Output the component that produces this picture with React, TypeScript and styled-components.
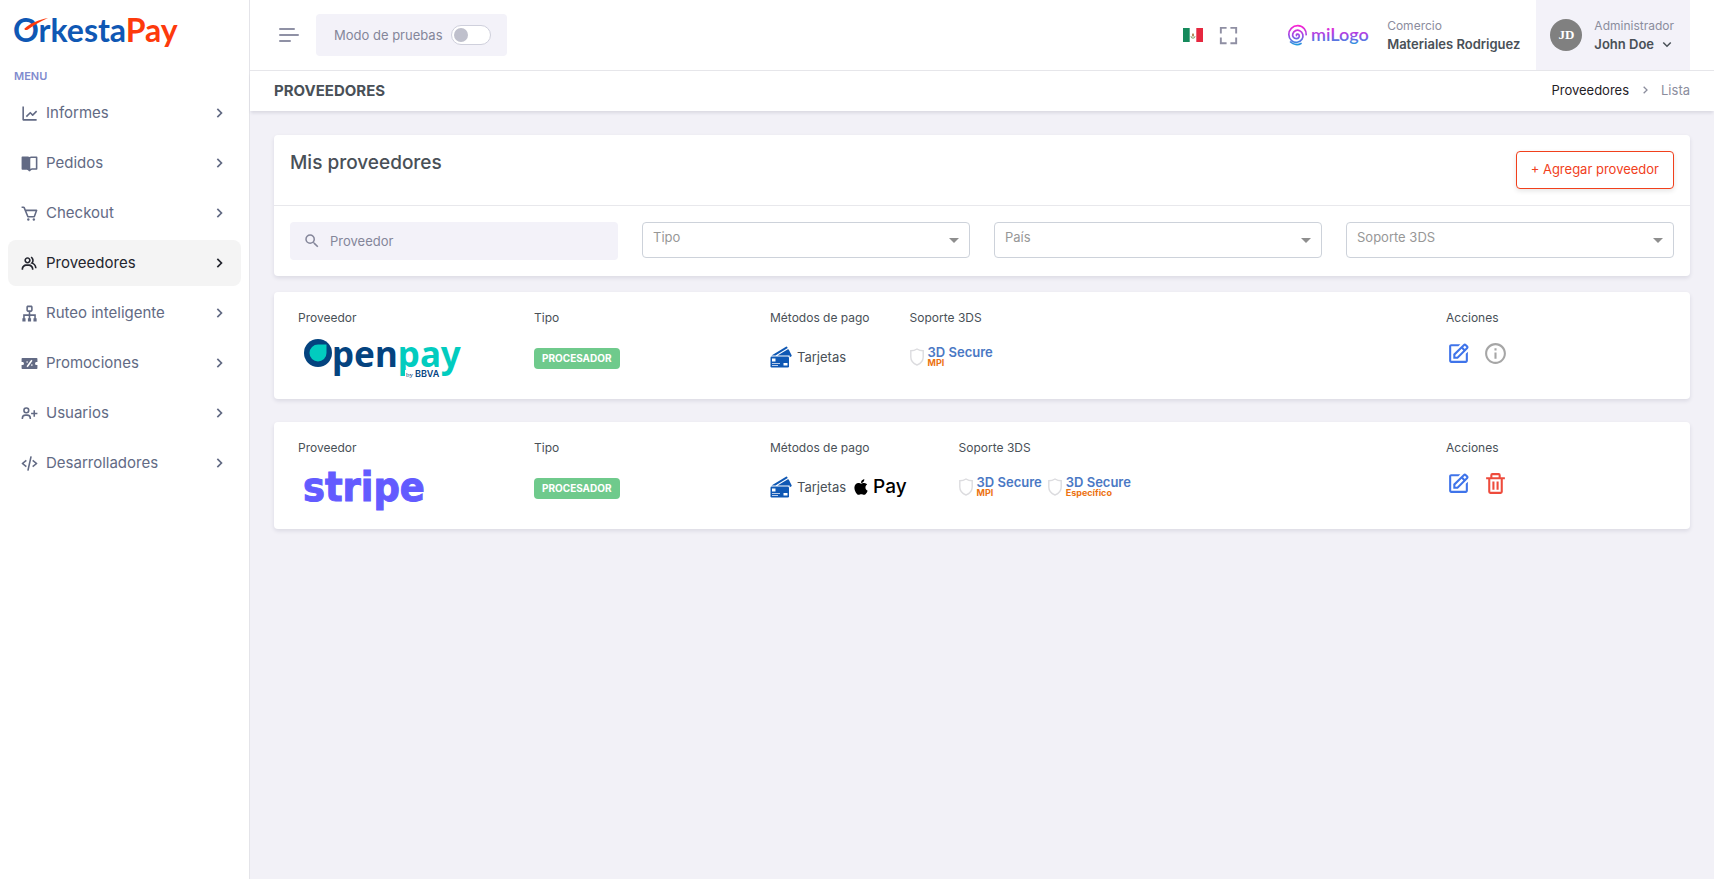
import React from "react";
import styled, { createGlobalStyle } from "styled-components";
import {
  BiSolidBookOpen,
  BiLineChart,
  BiCart,
  BiGroup,
  BiSitemap,
  BiSolidDiscount,
  BiUserPlus,
  BiCodeAlt,
  BiChevronRight,
  BiChevronDown,
  BiFullscreen,
  BiEdit,
  BiInfoCircle,
  BiTrash,
} from "react-icons/bi";
import { MdSearch } from "react-icons/md";
import { FaApple } from "react-icons/fa";

const GlobalStyle = createGlobalStyle`
  *, *::before, *::after { box-sizing: border-box; }
  body {
    margin: 0;
    background: #f2f1f7;
    color: #495057;
    font-family: Inter, "Liberation Sans", sans-serif;
    font-size: 13px;
    line-height: 20px;
  }
  button, input, select { font: inherit; color: inherit; }
  button { cursor: pointer; }
  svg { display: block; flex: none; }
  h1, h2, dl, dd, ul, ol, p { margin: 0; padding: 0; }
  ul, ol { list-style: none; }
`;

const Shell = styled.div`
  display: flex;
  min-height: 100vh;
`;

/* ---------- Sidebar ---------- */

const Sidebar = styled.aside`
  flex: none;
  width: 250px;
  background: #fff;
  border-right: 1px solid #e4e4e9;
`;

const Brand = styled.a`
  display: block;
  padding: 8px 0 0 12px;
  height: 66px;
`;

const MenuTitle = styled.p`
  padding-left: 14px;
  color: #7f8bce;
  font-size: 11px;
  font-weight: 600;
`;

const MenuList = styled.ul`
  display: flex;
  flex-direction: column;
  gap: 4px;
  padding: 4px 8px;
`;

const MenuLink = styled.a<{ $active?: boolean }>`
  display: flex;
  align-items: center;
  gap: 7px;
  height: 46px;
  padding: 0 12px;
  border-radius: 8px;
  font-size: 15px;
  text-decoration: none;
  color: ${(p) => (p.$active ? "#23252e" : "#626a84")};
  background: ${(p) => (p.$active ? "#f4f4f4" : "transparent")};
`;

const MenuLabel = styled.span`
  flex: 1;
`;

/* ---------- Header ---------- */

const Main = styled.div`
  flex: 1;
  min-width: 0;
`;

const TopBar = styled.header`
  display: flex;
  align-items: stretch;
  height: 71px;
  padding-right: 24px;
  background: #fff;
  border-bottom: 1px solid #e6e6ea;
`;

const BarGroup = styled.div<{ $gap: number; $start?: number; $end?: number }>`
  display: flex;
  align-items: center;
  gap: ${(p) => p.$gap}px;
  padding-left: ${(p) => p.$start ?? 0}px;
  padding-right: ${(p) => p.$end ?? 0}px;
`;

const Spacer = styled.div`
  flex: 1;
`;

const IconButton = styled.button`
  display: flex;
  padding: 0;
  border: 0;
  background: none;
  color: ${(p) => p.color ?? "#8f8fa3"};
`;

const TestMode = styled.label`
  display: flex;
  align-items: center;
  gap: 8px;
  height: 42px;
  padding: 0 16px 0 18px;
  border-radius: 4px;
  background: #f3f2f9;
  color: #84869a;
`;

const Switch = styled.input`
  appearance: none;
  display: flex;
  align-items: center;
  width: 40px;
  height: 20px;
  margin: 0;
  padding: 0 2px;
  border: 1px solid #cfd0dc;
  border-radius: 10px;
  background: #fff;
  &::before {
    content: "";
    width: 14px;
    height: 14px;
    border-radius: 50%;
    background: #bfc0cc;
  }
  &:checked::before { margin-left: auto; background: #556ee6; }
`;

const Stack = styled.span`
  display: flex;
  flex-direction: column;
  align-items: flex-start;
  line-height: 18px;
`;

const Caption = styled.span`
  color: #8b8d9d;
  font-size: 12px;
`;

const Strong = styled.span`
  display: flex;
  align-items: center;
  gap: 4px;
  font-weight: 600;
  color: #495057;
`;

const UserButton = styled.button`
  display: flex;
  align-items: center;
  gap: 12px;
  padding: 0 14px;
  border: 0;
  background: #f3f2f9;
`;

const Avatar = styled.span`
  width: 32px;
  height: 32px;
  border-radius: 50%;
  background: #808080;
  color: #fff;
  font: bold 13px/32px "Liberation Serif", serif;
  text-align: center;
`;

const TitleBar = styled.div`
  display: flex;
  align-items: center;
  justify-content: space-between;
  height: 40px;
  padding: 0 24px;
  background: #fff;
  box-shadow: 0 3px 3px -1px rgba(40, 40, 70, 0.12);
`;

const PageTitle = styled.h1`
  font-size: 15px;
  font-weight: 700;
`;

const Crumbs = styled.ol`
  display: flex;
  align-items: center;
  gap: 8px;
  padding-bottom: 2px;
  color: #8b8d9d;
`;

const CrumbItem = styled.li`
  display: flex;
  align-items: center;
  gap: 8px;
`;

const CrumbLink = styled.a`
  color: #1f2126;
  text-decoration: none;
`;

/* ---------- Content ---------- */

const Content = styled.main`
  padding: 24px;
`;

const Card = styled.section`
  border-radius: 4px;
  background: #fff;
  box-shadow: 0 2px 4px rgba(15, 20, 58, 0.1);
`;

const CardHeader = styled.div`
  display: flex;
  justify-content: space-between;
  align-items: flex-start;
  padding: 16px;
  border-bottom: 1px solid #e8e8ec;
`;

const CardTitle = styled.h2`
  font-size: 19px;
  font-weight: 500;
  line-height: 24px;
`;

const AddButton = styled.button`
  height: 38px;
  padding: 0 14px 2px;
  border: 1px solid #f1401c;
  border-radius: 4px;
  background: #fff;
  color: #f1401c;
  box-shadow: 0 2px 5px rgba(0, 0, 0, 0.1);
`;

const Filters = styled.div`
  display: grid;
  grid-template-columns: repeat(4, 1fr);
  align-items: start;
  gap: 24px;
  padding: 16px;
`;

const SearchBox = styled.label`
  display: flex;
  align-items: center;
  gap: 9px;
  height: 38px;
  padding: 0 13px;
  border-radius: 4px;
  background: #f3f2f9;
  color: #84869a;
`;

const SearchInput = styled.input`
  flex: 1;
  min-width: 0;
  padding: 0;
  border: 0;
  outline: 0;
  background: none;
  &::placeholder { color: #84869a; opacity: 1; }
`;

const SelectBox = styled.div`
  display: grid;
  align-items: center;
  > * { grid-area: 1 / 1; }
  > svg { justify-self: end; margin-right: 11px; pointer-events: none; }
`;

const Select = styled.select`
  appearance: none;
  width: 100%;
  height: 36px;
  padding: 0 32px 6px 10px;
  border: 1px solid #cdd2da;
  border-radius: 4px;
  background: #fff;
  color: #979797;
`;

const ProviderList = styled.ul`
  display: flex;
  flex-direction: column;
  gap: 23px;
  padding-top: 16px;
`;

const Fields = styled.dl`
  display: flex;
  padding: 16px 24px 17px;
`;

const Field = styled.div<{ $width?: number; $grow?: boolean; $end?: number }>`
  flex: ${(p) => (p.$grow ? "1 1 0" : "none")};
  width: ${(p) => (p.$width ? `${p.$width}px` : "auto")};
  padding-right: ${(p) => p.$end ?? 0}px;
`;

const FieldName = styled.dt`
  margin-bottom: 4px;
  font-size: 12px;
  line-height: 20px;
`;

const FieldValue = styled.dd<{ $gap?: number; $height?: number; $end?: number }>`
  display: flex;
  align-items: center;
  gap: ${(p) => p.$gap ?? 8}px;
  height: ${(p) => p.$height ?? 50}px;
  padding-right: ${(p) => p.$end ?? 0}px;
`;

const Badge = styled.span`
  margin-top: 3px;
  padding: 0 8px;
  border-radius: 4px;
  background: #6fca8c;
  color: #fff;
  font-size: 10px;
  font-weight: 700;
  line-height: 21px;
`;

const Method = styled.span`
  display: flex;
  align-items: center;
  gap: 5px;
`;

const ApplePay = styled.span`
  display: flex;
  align-items: center;
  gap: 3px;
  color: #000;
  font-size: 19px;
  font-weight: 500;
`;

const Secure = styled.span`
  display: flex;
  align-items: center;
  gap: 4px;
`;

const SecureText = styled.span`
  display: flex;
  flex-direction: column;
`;

const SecureName = styled.span`
  color: #4a78c4;
  font-size: 13px;
  font-weight: 600;
  line-height: 12px;
`;

const SecureKind = styled.span`
  color: #ec7211;
  font-size: 9px;
  font-weight: 700;
  line-height: 10px;
`;

/* ---------- Drawings ---------- */

const OrkestaLogo = () => (
  <svg width="180" height="50" viewBox="0 -4 180 50" role="img" aria-label="OrkestaPay">
    <text x="1" y="30" fontFamily="Lato, sans-serif" fontSize="32" fontWeight="700" fill="#0f58b4">
      Orkesta<tspan fill="#fd3a0c">Pay</tspan>
    </text>
    <path d="M12.500 16.500C19 11 26 8 36 6c-7 3-14 7-20 11.500-2 1-4 .5-3.500-1z" fill="#fd3a0c" />
  </svg>
);

const MenuLines = () => (
  <svg width="20" height="14" viewBox="0 0 20 14" stroke="#8f91a5" strokeWidth="2" strokeLinecap="round">
    <path d="M1 1h14M1 7h18M1 13h10" />
  </svg>
);

const MexicoFlag = () => (
  <svg width="20" height="14" viewBox="0 0 20 14" role="img" aria-label="México">
    <path d="M0 0h20v14H0z" fill="#fff" />
    <path d="M0 0h6.700v14H0z" fill="#168a5c" />
    <path d="M13.300 0H20v14h-6.700z" fill="#e6283f" />
    <path d="M8 8.200a2 2 0 0 0 4 0" fill="none" stroke="#7c9a63" />
    <path d="M10 5l1 1.500-.3 2H9.300L9 6.500z" fill="#a87442" />
  </svg>
);

const MiLogo = () => (
  <svg width="84" height="24" viewBox="0 0 84 24" role="img" aria-label="miLogo">
    <defs>
      <linearGradient id="mi" gradientUnits="userSpaceOnUse" x1="0" y1="2" x2="0" y2="23">
        <stop offset="0" stopColor="#ff1fd0" />
        <stop offset="0.500" stopColor="#9a4be6" />
        <stop offset="1" stopColor="#12a5dd" />
      </linearGradient>
    </defs>
    <path
      d="M10.500 12.500c-.6-1.600 1.700-2 2.500-.6 1 1.900-.6 3.900-2.700 3.800-2.700-.1-4.200-2.600-3.500-5C7.700 7.700 11 6.500 13.700 7.700c3.300 1.500 4.200 5.600 2.300 8.600-2.300 3.500-7.200 4-10.400 1.300C1.900 14.400 2 8.600 5.300 5.300 9 1.700 15 1.800 18.300 5.700c1.500 1.800 2 4 1.900 6M4.500 19c3 2.800 7.500 3.300 10.500 1.500"
      fill="none"
      stroke="url(#mi)"
      strokeWidth="1.700"
      strokeLinecap="round"
    />
    <text x="25" y="18" fontFamily="Lato, sans-serif" fontSize="18" fontWeight="600" fill="url(#mi)">
      miLogo
    </text>
  </svg>
);

const OpenpayLogo = () => (
  <svg width="170" height="50" viewBox="0 0 170 50" role="img" aria-label="Openpay by BBVA">
    <circle cx="20" cy="21" r="14" fill="#04437f" />
    <path d="M20 12.500h8.500V21a8.500 8.500 0 1 1-8.500-8.500z" fill="#02ccbf" />
    <text x="34" y="35" fontFamily="'Noto Sans', sans-serif" fontSize="35" fontWeight="700" fill="#04437f">
      pen<tspan fill="#02ccbf">pay</tspan>
    </text>
    <path d="M107 38h35v8h-35z" fill="#fff" />
    <text x="108" y="45" fontFamily="'Liberation Serif', serif" fontSize="7" fill="#04437f">by</text>
    <text x="117" y="45" fontFamily="Inter, sans-serif" fontSize="9" fontWeight="600" fill="#04437f">BBVA</text>
  </svg>
);

const StripeLogo = () => (
  <svg width="170" height="50" viewBox="0 0 170 50" role="img" aria-label="stripe">
    <text
      x="5"
      y="39"
      fontFamily="'DejaVu Sans Condensed', 'Noto Sans', sans-serif"
      fontSize="41"
      fontWeight="700"
      fill="#635bff"
      stroke="#635bff"
      strokeWidth="1"
    >
      stripe
    </text>
  </svg>
);

const CardsIcon = () => (
  <svg width="22" height="22" viewBox="0 0 22 22" fill="#0f58b4">
    <path d="M1.500 9.500L16 .7c.6-.3 1 0 1.200.4l.5 1L5.500 9.500z" />
    <path d="M7.500 9.500l10-6c.6-.3 1.200-.2 1.500.4l2.600 5.400c.3.600 0 1-.5 1.300l-1.400.7V9.500z" />
    <rect x="0.500" y="10.500" width="18.500" height="11" rx="1.200" />
    <path d="M2 12.500h3.500v3H2zM13.500 17h4v2.500h-4z" fill="#fff" />
    <path d="M2 17.500h8M2 19.500h6" stroke="#b9cdea" strokeWidth="1" />
  </svg>
);

const ShieldIcon = () => (
  <svg width="14" height="18" viewBox="0 0 14 18" fill="none" stroke="#dcdcdf" strokeWidth="1.400">
    <path d="M7 1c2 1.300 4 1.800 6.200 1.800V9c0 4-2.600 6.600-6.200 8C3.400 15.600.8 13 .8 9V2.800C3 2.800 5 2.300 7 1z" />
  </svg>
);

const Caret = () => (
  <svg width="10" height="5" viewBox="0 0 10 5" fill="#8e8e8e">
    <path d="M0 0h10L5 5z" />
  </svg>
);

/* ---------- Page ---------- */

const menu = [
  { label: "Informes", icon: BiLineChart },
  { label: "Pedidos", icon: BiSolidBookOpen },
  { label: "Checkout", icon: BiCart },
  { label: "Proveedores", icon: BiGroup, active: true },
  { label: "Ruteo inteligente", icon: BiSitemap },
  { label: "Promociones", icon: BiSolidDiscount },
  { label: "Usuarios", icon: BiUserPlus },
  { label: "Desarrolladores", icon: BiCodeAlt },
];

const providers = [
  { id: "openpay", logo: OpenpayLogo, applePay: false, secure: ["MPI"], removable: false },
  { id: "stripe", logo: StripeLogo, applePay: true, secure: ["MPI", "Específico"], removable: true },
];

const filters = ["Tipo", "País", "Soporte 3DS"];

export default function App() {
  return (
    <Shell>
      <GlobalStyle />
      <Sidebar>
        <Brand href="#">
          <OrkestaLogo />
        </Brand>
        <MenuTitle>MENU</MenuTitle>
        <nav>
          <MenuList>
            {menu.map(({ label, icon: Icon, active }) => (
              <li key={label}>
                <MenuLink href="#" $active={active}>
                  <Icon size={19} />
                  <MenuLabel>{label}</MenuLabel>
                  <BiChevronRight size={20} />
                </MenuLink>
              </li>
            ))}
          </MenuList>
        </nav>
      </Sidebar>

      <Main>
        <TopBar>
          <BarGroup $gap={17} $start={29}>
            <IconButton aria-label="Abrir menú">
              <MenuLines />
            </IconButton>
            <TestMode>
              Modo de pruebas
              <Switch type="checkbox" role="switch" />
            </TestMode>
          </BarGroup>
          <Spacer />
          <BarGroup $gap={14} $end={46}>
            <IconButton aria-label="Idioma">
              <MexicoFlag />
            </IconButton>
            <IconButton aria-label="Pantalla completa">
              <BiFullscreen size={23} />
            </IconButton>
          </BarGroup>
          <BarGroup $gap={17} $end={16}>
            <MiLogo />
            <Stack>
              <Caption>Comercio</Caption>
              <Strong>Materiales Rodriguez</Strong>
            </Stack>
          </BarGroup>
          <UserButton>
            <Avatar>JD</Avatar>
            <Stack>
              <Caption>Administrador</Caption>
              <Strong>
                John Doe <BiChevronDown size={18} />
              </Strong>
            </Stack>
          </UserButton>
        </TopBar>

        <TitleBar>
          <PageTitle>PROVEEDORES</PageTitle>
          <Crumbs>
            <CrumbItem>
              <CrumbLink href="#">Proveedores</CrumbLink>
              <BiChevronRight size={16} />
            </CrumbItem>
            <CrumbItem>Lista</CrumbItem>
          </Crumbs>
        </TitleBar>

        <Content>
          <Card>
            <CardHeader>
              <CardTitle>Mis proveedores</CardTitle>
              <AddButton>+ Agregar proveedor</AddButton>
            </CardHeader>
            <Filters>
              <SearchBox>
                <MdSearch size={18} />
                <SearchInput type="text" placeholder="Proveedor" aria-label="Proveedor" />
              </SearchBox>
              {filters.map((name) => (
                <SelectBox key={name}>
                  <Select aria-label={name}>
                    <option>{name}</option>
                  </Select>
                  <Caret />
                </SelectBox>
              ))}
            </Filters>
          </Card>

          <ProviderList>
            {providers.map(({ id, logo: Logo, applePay, secure, removable }) => (
              <li key={id}>
                <Card>
                  <Fields>
                    <Field $width={236}>
                      <FieldName>Proveedor</FieldName>
                      <FieldValue>
                        <Logo />
                      </FieldValue>
                    </Field>
                    <Field $width={236}>
                      <FieldName>Tipo</FieldName>
                      <FieldValue>
                        <Badge>PROCESADOR</Badge>
                      </FieldValue>
                    </Field>
                    <Field $end={40}>
                      <FieldName>Métodos de pago</FieldName>
                      <FieldValue $gap={6} $end={12}>
                        <Method>
                          <CardsIcon />
                          Tarjetas
                        </Method>
                        {applePay && (
                          <ApplePay>
                            <FaApple size={18} />
                            Pay
                          </ApplePay>
                        )}
                      </FieldValue>
                    </Field>
                    <Field $grow>
                      <FieldName>Soporte 3DS</FieldName>
                      <FieldValue $gap={6}>
                        {secure.map((kind) => (
                          <Secure key={kind}>
                            <ShieldIcon />
                            <SecureText>
                              <SecureName>3D Secure</SecureName>
                              <SecureKind>{kind}</SecureKind>
                            </SecureText>
                          </Secure>
                        ))}
                      </FieldValue>
                    </Field>
                    <Field $width={220}>
                      <FieldName>Acciones</FieldName>
                      <FieldValue $gap={12} $height={42}>
                        <IconButton aria-label="Editar" color="#3f74ea">
                          <BiEdit size={25} />
                        </IconButton>
                        {removable ? (
                          <IconButton aria-label="Eliminar" color="#ee4b3c">
                            <BiTrash size={25} />
                          </IconButton>
                        ) : (
                          <IconButton aria-label="Información" color="#a6a6a6">
                            <BiInfoCircle size={25} />
                          </IconButton>
                        )}
                      </FieldValue>
                    </Field>
                  </Fields>
                </Card>
              </li>
            ))}
          </ProviderList>
        </Content>
      </Main>
    </Shell>
  );
}
